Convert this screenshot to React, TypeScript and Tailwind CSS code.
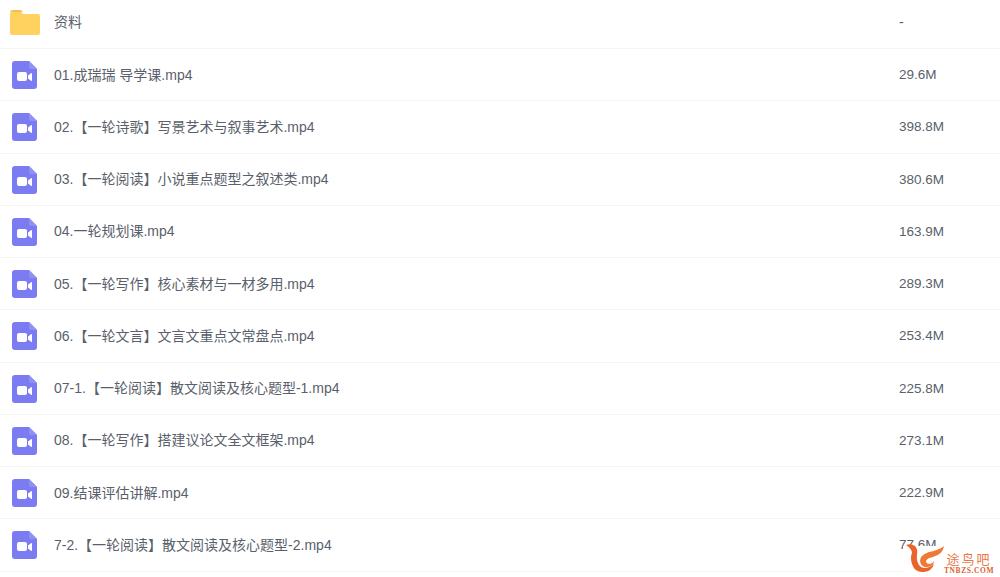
const files = [
  { name: "01.成瑞瑞 导学课.mp4", size: "29.6M" },
  { name: "02.【一轮诗歌】写景艺术与叙事艺术.mp4", size: "398.8M" },
  { name: "03.【一轮阅读】小说重点题型之叙述类.mp4", size: "380.6M" },
  { name: "04.一轮规划课.mp4", size: "163.9M" },
  { name: "05.【一轮写作】核心素材与一材多用.mp4", size: "289.3M" },
  { name: "06.【一轮文言】文言文重点文常盘点.mp4", size: "253.4M" },
  { name: "07-1.【一轮阅读】散文阅读及核心题型-1.mp4", size: "225.8M" },
  { name: "08.【一轮写作】搭建议论文全文框架.mp4", size: "273.1M" },
  { name: "09.结课评估讲解.mp4", size: "222.9M" },
  { name: "7-2.【一轮阅读】散文阅读及核心题型-2.mp4", size: "77.6M" },
];

function FolderIcon() {
  return (
    <svg width="30" height="25" viewBox="0 0 30 25">
      <path d="M0 3q0-3 3-3h7q2 0 3 2h-13z" fill="#f5c04f" />
      <path d="M0 4q0-2 2-2h9l2 2h15q2 0 2 2v17q0 2-2 2H2q-2 0-2-2z" fill="#ffd25f" />
    </svg>
  );
}

function VideoIcon() {
  return (
    <svg width="25" height="28" viewBox="0 0 25 28">
      <path d="M3 0h14l8 8v17q0 3-3 3H3q-3 0-3-3V3q0-3 3-3z" fill="#7b7bf2" />
      <path d="M17 0l8 8h-6q-2 0-2-2z" fill="#9190f5" />
      <rect x="5" y="11" width="10" height="9" rx="2" fill="#fff" />
      <path d="M16 14.5l3-2.3q1-.5 1 .5v6.6q0 1-1 .5l-3-2.3z" fill="#fff" />
    </svg>
  );
}

function Watermark() {
  return (
    <div className="absolute right-0 bottom-0 flex h-[31px] w-[97px] bg-white pl-[2px]">
      <svg width="40" height="30" viewBox="0 0 40 30" className="mt-[-3px] shrink-0">
        <path d="M1 2Q6 0 10 3Q13 6 12 12Q11 20 16 24Q22 27 29 21Q27 28 19 29Q10 30 7 21Q5 15 7 10Q7 6 1 2z" fill="#e9632a" />
        <path d="M39 3Q38 11 28 14Q22 15 21 18Q21 21 25 21Q28 20 29 18Q29 23 23 24Q16 25 15 18Q15 12 24 9Q34 7 39 3z" fill="#ee7a35" />
      </svg>
      <div className="flex w-[48px] shrink-0 flex-col items-center gap-[2px] pt-[6px]">
        <span className="font-['Noto_Sans_CJK_SC',sans-serif] text-[13px] leading-[13px] tracking-[2px] whitespace-nowrap text-[#e9774a]">途鸟吧</span>
        <span className="font-['Liberation_Serif',serif] text-[7.5px] leading-[7px] font-bold tracking-[0.6px] whitespace-nowrap text-[#d9622f]">TNBZS.COM</span>
      </div>
    </div>
  );
}

export default function App() {
  return (
    <div className="relative h-[577px] w-[1000px] overflow-hidden bg-white font-['Liberation_Sans','Noto_Sans_CJK_SC',sans-serif] text-[14px] text-[#5a5f6b]">
      <div className="flex h-[49px] items-center border-b border-[#f5f5f6] pb-[4px]">
        <div className="flex w-[54px] shrink-0 pl-[10px]">
          <FolderIcon />
        </div>
        <span className="flex-1">资料</span>
        <span className="w-[101px] shrink-0">-</span>
      </div>
      {files.map((f) => (
        <div key={f.name} className="flex h-[52.25px] items-center border-b border-[#f5f5f6] pt-[1px]">
          <div className="flex w-[54px] shrink-0 pl-[12px]">
            <VideoIcon />
          </div>
          <span className="flex-1">{f.name}</span>
          <span className="w-[101px] shrink-0 text-[13.5px]">{f.size}</span>
        </div>
      ))}
      <Watermark />
    </div>
  );
}
